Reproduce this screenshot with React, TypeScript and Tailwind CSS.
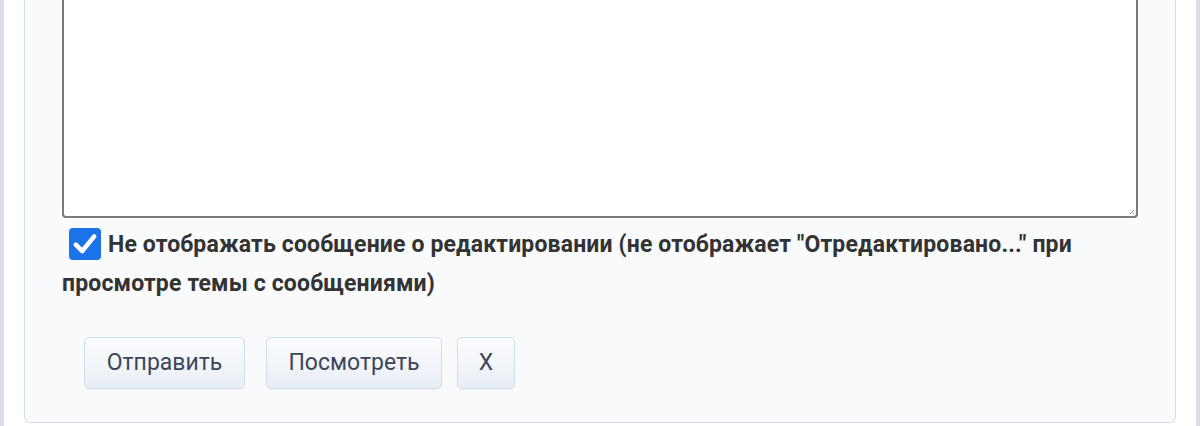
import React from "react";

export default function App() {
  const btn =
    "h-[52px] rounded-[5px] border border-[#cfdcea] bg-gradient-to-b from-[#fbfcfe] to-[#e9eef5] text-[23px] text-[#3b4759] flex items-center justify-center shadow-[0_1px_1px_rgba(0,0,0,0.03)]";
  return (
    <div
      className="flex h-[426px] w-[1200px] bg-white overflow-hidden"
      style={{ fontFamily: "Roboto, 'Liberation Sans', sans-serif" }}
    >
      <div className="w-[4px] shrink-0 bg-[#d9dde4]" />
      <div className="flex-1 px-[20px]">
        <div className="h-[423px] border border-t-0 border-[#d3dfec] rounded-b-[6px] bg-[#f8fafc] px-[37px] flex flex-col">
          <div className="relative h-[218px] w-full border-[2px] border-t-0 border-[#7a7a7a] rounded-b-[4px] bg-white">
            <svg
              className="absolute right-[1px] bottom-[1px]"
              width="6"
              height="6"
              viewBox="0 0 6 6"
            >
              <path d="M5 1 L1 5 M5 4 L4 5" stroke="#888" strokeWidth="1" />
            </svg>
          </div>
          <p className="mt-[7px] text-[23px] font-bold tracking-[0.15px] leading-[39px] text-[#333333]">
            <span className="inline-flex align-middle mx-[7px] mb-[3px] h-[32px] w-[32px] items-center justify-center rounded-[4px] bg-[#1a73e8]">
              <svg width="26" height="26" viewBox="0 0 24 24">
                <path
                  d="M3.5 12.5 L9.5 18.5 L20.5 5"
                  fill="none"
                  stroke="white"
                  strokeWidth="4.2"
                  strokeLinecap="round"
                  strokeLinejoin="round"
                />
              </svg>
            </span>
            Не отображать сообщение о редактировании (не отображает "Отредактировано..." при просмотре темы с сообщениями)
          </p>
          <div className="mt-[34px] flex pl-[22px]">
            <button className={btn + " w-[161px]"}>Отправить</button>
            <button className={btn + " w-[176px] ml-[21px]"}>Посмотреть</button>
            <button className={btn + " w-[58px] ml-[15px]"}>X</button>
          </div>
        </div>
      </div>
      <div className="w-[4px] shrink-0 bg-[#d9dde4]" />
    </div>
  );
}
